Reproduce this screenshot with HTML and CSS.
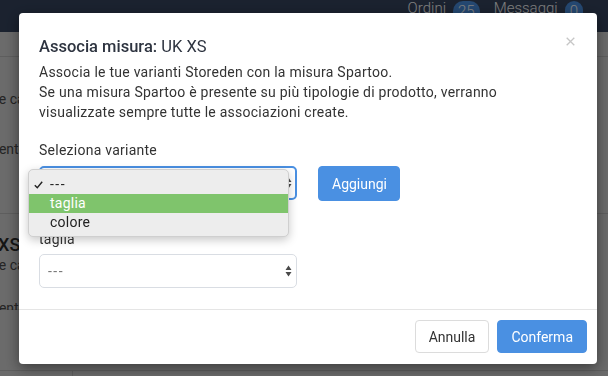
FILE: index.html
```html
<!DOCTYPE html>
<html lang="it">

<head>
    <meta charset="UTF-8" />
    <meta name="viewport" content="width=device-width, initial-scale=1.0" />
    <title>Associa misura</title>
    <link rel="stylesheet" href="styles.css">
</head>

<body>

    <!-- page behind the modal -->
    <div class="page">
        <header class="topbar">
            <nav class="topnav">
                <span class="navitem">Ordini <span class="badge">25</span></span>
                <span class="navitem">Messaggi <span class="badge">0</span></span>
            </nav>
        </header>

        <main class="content">
            <div class="strip"></div>
            <section class="block">
                <div class="list-col">
                    <p class="frag">Associa le categorie</p>
                    <p class="frag frag-b">Assortimento</p>
                </div>
            </section>
            <section class="block2">
                <div class="list-col">
                    <div class="list-item">
                        <p class="frag frag-title">Taglia XS</p>
                        <p class="frag frag-c">Associa le categorie</p>
                        <p class="frag frag-d">Assortimento</p>
                    </div>
                </div>
            </section>
            <div class="bottom-row">
                <div class="bottom-cell"></div>
            </div>
        </main>
    </div>

    <div class="backdrop"></div>

    <!-- modal -->
    <div class="modal-wrap">
        <div class="modal">
            <button class="close" type="button" aria-label="Chiudi">
                <svg width="9" height="9" viewBox="0 0 9 9">
                    <path d="M0.7 0.7 L8.3 8.3 M8.3 0.7 L0.7 8.3" stroke="#c6c6c6" stroke-width="1.3" fill="none" />
                </svg>
            </button>

            <div class="modal-body">
                <h4 class="modal-title"><strong>Associa misura:</strong> UK XS</h4>
                <p class="intro">
                    Associa le tue varianti Storeden con la misura Spartoo.<br>
                    Se una misura Spartoo è presente su più tipologie di prodotto, verranno
                    visualizzate sempre tutte le associazioni create.
                </p>

                <div class="form-group">
                    <label for="variant">Seleziona variante</label>
                    <div class="field-row">
                        <div class="select-wrap">
                            <select id="variant" class="select select-focus">
                                <option>---</option>
                                <option>taglia</option>
                                <option>colore</option>
                            </select>
                            <svg class="arrows" width="7" height="12" viewBox="0 0 7 12">
                                <path d="M3.5 0.5 L6.5 5 L0.5 5 Z M3.5 11.5 L6.5 7 L0.5 7 Z" fill="#4a4a4a" />
                            </svg>

                            <!-- open native option list -->
                            <ul class="menu">
                                <li class="menu-item">
                                    <svg class="check" width="9" height="8" viewBox="0 0 9 8">
                                        <path d="M0.8 4.2 L3.3 6.8 L8.2 0.8" stroke="#222" stroke-width="1.4" fill="none" />
                                    </svg>
                                    <span class="dashes">---</span>
                                </li>
                                <li class="menu-item active">taglia</li>
                                <li class="menu-item">colore</li>
                            </ul>
                        </div>
                        <button type="button" class="btn btn-primary btn-add">Aggiungi</button>
                    </div>
                </div>

                <div class="form-group form-group-2">
                    <label for="taglia">taglia</label>
                    <div class="select-wrap">
                        <select id="taglia" class="select">
                            <option>---</option>
                        </select>
                        <svg class="arrows" width="7" height="12" viewBox="0 0 7 12">
                            <path d="M3.5 0.5 L6.5 5 L0.5 5 Z M3.5 11.5 L6.5 7 L0.5 7 Z" fill="#4a4a4a" />
                        </svg>
                    </div>
                </div>
            </div>

            <div class="modal-footer">
                <button type="button" class="btn btn-default">Annulla</button>
                <button type="button" class="btn btn-primary">Conferma</button>
            </div>
        </div>
    </div>

</body>

</html>
```

FILE: styles.css
```css
* {
    box-sizing: border-box;
}

body {
    margin: 0;
    height: 376px;
    overflow: hidden;
    font-family: 'Roboto', 'Noto Sans', sans-serif;
    background: #d6d6d6;
    color: #333;
}

/* page behind */

.topbar {
    height: 32px;
    background: #36455f;
    display: flex;
    justify-content: flex-end;
}

.topnav {
    display: flex;
    align-items: flex-start;
    gap: 14px;
    padding-right: 25px;
    font-weight: 300;
    font-size: 15px;
    line-height: 17px;
    color: #fff;
}

.navitem {
    display: flex;
    gap: 7px;
}

.badge {
    background: #4a90e2;
    border-radius: 10px;
    padding: 2px 5px 4px;
    margin-top: 1px;
    min-width: 18px;
    text-align: center;
}

.content {
    display: flex;
    flex-direction: column;
}

.strip {
    height: 25px;
    border-bottom: 1px solid #bdbdbd;
}

.block {
    height: 157px;
    border-bottom: 1px solid #bdbdbd;
    padding-top: 33px;
}

/* the list behind is scrolled sideways, only its edge shows */
.list-col {
    width: 77px;
    margin-left: -58px;
    overflow: hidden;
}

.frag {
    margin: 0;
    white-space: nowrap;
    font-size: 14px;
    line-height: 18px;
    color: #4a4a4a;
}

.frag-b {
    margin-top: 32px;
}

.block2 {
    height: 157px;
    border-bottom: 1px solid #bdbdbd;
}

.list-item {
    height: 96px;
    border-bottom: 1px solid #bdbdbd;
    padding-top: 20px;
}

.frag-title {
    font-size: 18px;
    line-height: 22px;
    font-weight: 500;
    color: #2a2a2a;
    margin-left: 3px;
}

.frag-d {
    margin-top: 25px;
}

.bottom-row {
    height: 6px;
}

.bottom-cell {
    width: 73px;
    height: 100%;
    border-right: 1px solid #bdbdbd;
}

.backdrop {
    position: fixed;
    inset: 0;
    background: rgba(0, 0, 0, 0.5);
}

/* modal */

.modal-wrap {
    position: fixed;
    inset: 0;
    padding: 13px 0 0 19px;
}

.modal {
    position: relative;
    width: 578px;
    background: #fff;
    border-radius: 4px;
    box-shadow: 0 4px 14px rgba(0, 0, 0, 0.45);
}

.close {
    position: absolute;
    top: 24px;
    right: 22px;
    border: none;
    background: none;
    padding: 0;
    width: 9px;
    height: 9px;
    display: flex;
}

.modal-body {
    padding: 23px 20px 21px;
    letter-spacing: 0.25px;
}

.modal-title {
    margin: 0;
    font-size: 16.5px;
    line-height: 22px;
    font-weight: 400;
    letter-spacing: 0;
    color: #2e3440;
}

.modal-title strong {
    font-weight: 500;
}

.intro {
    margin: 4px 0 0;
    max-width: 520px;
    font-size: 14px;
    line-height: 20px;
    color: #333;
}

.form-group {
    margin-top: 18px;
}

.form-group-2 {
    margin-top: 28px;
}

label {
    display: block;
    font-size: 14px;
    line-height: 20px;
    color: #333;
    margin-bottom: 6px;
}

.form-group-2 label {
    margin-bottom: 5px;
}

.field-row {
    display: flex;
    align-items: flex-start;
    gap: 21px;
}

.select-wrap {
    position: relative;
    width: 258px;
}

.select {
    appearance: none;
    display: block;
    width: 100%;
    height: 34px;
    padding: 0 8px;
    font-family: inherit;
    font-size: 14px;
    letter-spacing: 1.5px;
    color: #777;
    background: #fff;
    border: 1px solid #d9dde3;
    border-radius: 5px;
}

.select-focus {
    border: 2px solid #4a90e2;
}

.arrows {
    position: absolute;
    right: 5px;
    top: 11px;
}

.menu {
    position: absolute;
    top: 3px;
    left: -11px;
    width: 261px;
    margin: 0;
    padding: 5px 0 4px;
    list-style: none;
    background: #ededed;
    border: 1px solid #cfcfcf;
    border-radius: 5px;
    box-shadow: 0 3px 10px rgba(0, 0, 0, 0.22);
}

.menu-item {
    position: relative;
    height: 19px;
    line-height: 19px;
    padding-left: 21px;
    font-size: 14px;
    color: #222;
}

.menu-item.active {
    background: #7fc46c;
    color: #fff;
}

.dashes {
    letter-spacing: 1.5px;
}

.check {
    position: absolute;
    left: 5px;
    top: 6px;
}

.btn {
    font-family: inherit;
    font-size: 14px;
    height: 33px;
    padding: 0 13px;
    border-radius: 4px;
    cursor: pointer;
}

.btn-primary {
    background: #4a90e2;
    border: 1px solid #4a90e2;
    color: #fff;
}

.btn-add {
    height: 35px;
    width: 82px;
}

.btn-default {
    background: #fff;
    border: 1px solid #dcdcdc;
    color: #333;
}

.modal-footer {
    border-top: 1px solid #e5e5e5;
    padding: 10px 10px 11px;
    display: flex;
    justify-content: flex-end;
    gap: 8px;
}
```
